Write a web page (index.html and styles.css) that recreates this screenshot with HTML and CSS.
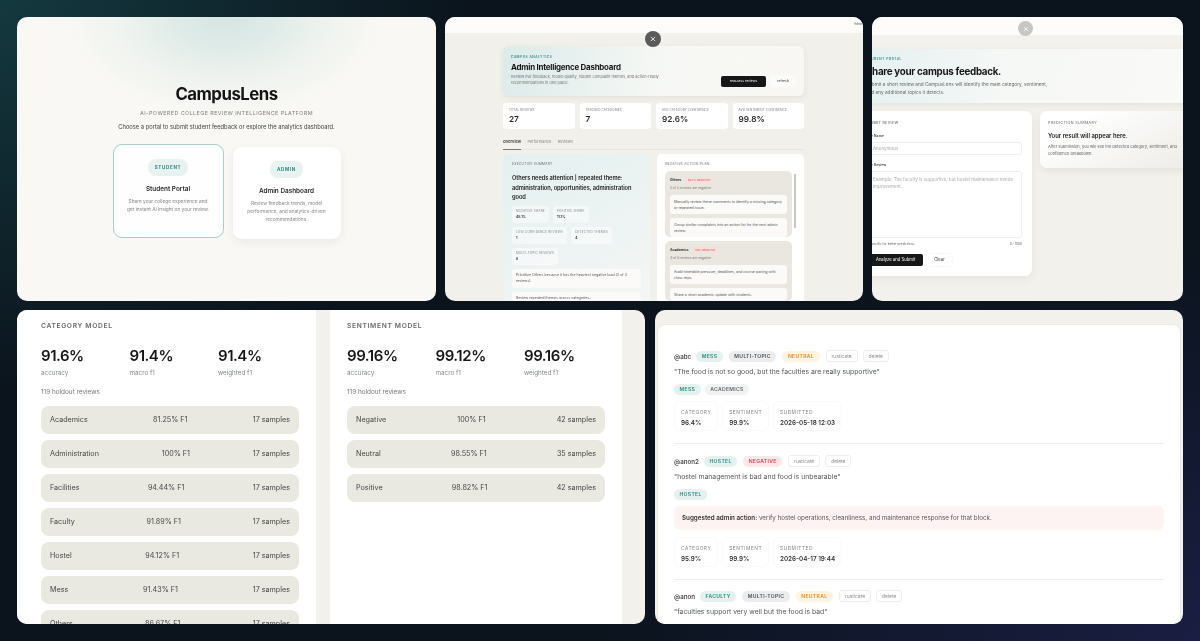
FILE: index.html
```html
<!DOCTYPE html>
<html lang="en">
<head>
  <meta charset="UTF-8">
  <title>CampusLens</title>
  <link rel="stylesheet" href="styles.css">
</head>
<body>
  <div class="collage">
    <div class="row-top">
      <section class="shot landing">
        <h1>CampusLens</h1>
        <p class="tagline">AI-POWERED COLLEGE REVIEW INTELLIGENCE PLATFORM</p>
        <p class="choose">Choose a portal to submit student feedback or explore the analytics dashboard.</p>
        <div class="portals">
          <div class="portal portal-active">
            <span class="portal-tag">STUDENT</span>
            <h3>Student Portal</h3>
            <p>Share your college experience and get instant AI insight on your review.</p>
          </div>
          <div class="portal portal-admin">
            <span class="portal-tag">ADMIN</span>
            <h3>Admin Dashboard</h3>
            <p>Review feedback trends, model performance, and analytics-driven recommendations.</p>
          </div>
        </div>
      </section>

      <section class="shot dash">
        <div class="topbar dash-topbar"><span class="top-pill">Admin</span></div>
        <button class="close close-dark">
          <svg viewBox="0 0 10 10" width="6" height="6"><path d="M1.5 1.5l7 7M8.5 1.5l-7 7" stroke="#fff" stroke-width="1.3" fill="none"/></svg>
        </button>
        <div class="dash-main">
          <div class="dash-hero">
            <div>
              <div class="eyebrow">CAMPUS ANALYTICS</div>
              <h2>Admin Intelligence Dashboard</h2>
              <p>Review live feedback, model quality, hidden complaint themes, and action-ready recommendations in one place.</p>
            </div>
            <div class="hero-btns">
              <span class="btn-dark">reassess reviews</span>
              <span class="btn-light">refresh</span>
            </div>
          </div>
          <div class="stats">
            <div class="stat"><small>TOTAL REVIEWS</small><b>27</b></div>
            <div class="stat"><small>TRACKED CATEGORIES</small><b>7</b></div>
            <div class="stat"><small>AVG CATEGORY CONFIDENCE</small><b>92.6%</b></div>
            <div class="stat"><small>AVG SENTIMENT CONFIDENCE</small><b>99.8%</b></div>
          </div>
          <div class="tabs">
            <span class="tab-on">Overview</span>
            <span>Performance</span>
            <span>Reviews</span>
          </div>
          <div class="dash-cols">
            <div class="summary">
              <div class="mini-title">EXECUTIVE SUMMARY</div>
              <h4>Others needs attention | repeated theme: administration, opportunities, administration good</h4>
              <div class="facts">
                <div class="fact"><small>NEGATIVE SHARE</small><b>48.1%</b></div>
                <div class="fact"><small>POSITIVE SHARE</small><b>11.1%</b></div>
                <div class="fact"><small>LOW-CONFIDENCE REVIEWS</small><b>1</b></div>
                <div class="fact"><small>DETECTED THEMES</small><b>4</b></div>
                <div class="fact"><small>MULTI-TOPIC REVIEWS</small><b>8</b></div>
              </div>
              <div class="note">Prioritize Others because it has the heaviest negative load (2 of 3 reviews).</div>
              <div class="note">Review repeated themes across categories.</div>
            </div>
            <div class="plan">
              <div class="plan-scroll"></div>
              <div class="mini-title">NEGATIVE ACTION PLAN</div>
              <div class="plan-group">
                <div class="plan-head"><b>Others</b><span class="plan-neg">66.7% NEGATIVE</span></div>
                <div class="plan-sub">2 of 3 reviews are negative</div>
                <div class="note">Manually review these comments to identify a missing category or repeated issue.</div>
                <div class="note">Group similar complaints into an action list for the next admin review.</div>
              </div>
              <div class="plan-group">
                <div class="plan-head"><b>Academics</b><span class="plan-neg">50% NEGATIVE</span></div>
                <div class="plan-sub">4 of 8 reviews are negative</div>
                <div class="note">Audit timetable pressure, deadlines, and course pacing with class reps.</div>
                <div class="note">Share a short academic update with students.</div>
              </div>
            </div>
          </div>
        </div>
      </section>

      <section class="shot student">
        <div class="topbar student-topbar"></div>
        <button class="close close-light">
          <svg viewBox="0 0 10 10" width="6" height="6"><path d="M1.5 1.5l7 7M8.5 1.5l-7 7" stroke="#fff" stroke-width="1.2" fill="none"/></svg>
        </button>
        <div class="student-main">
          <div class="student-hero">
            <div class="eyebrow">STUDENT PORTAL</div>
            <h2>Share your campus feedback.</h2>
            <p>Submit a short review and CampusLens will identify the main category, sentiment,<br>and any additional topics it detects.</p>
          </div>
          <div class="student-cols">
            <div class="submit">
              <div class="mini-title">SUBMIT REVIEW</div>
              <label>Your Name</label>
              <div class="field">Anonymous</div>
              <label>Your Review</label>
              <div class="field field-area">Example: The faculty is supportive, but hostel maintenance needs improvement.</div>
              <div class="hint"><span>Be specific for better predictions.</span><span>0 / 1000</span></div>
              <div class="submit-btns">
                <span class="btn-analyze">Analyze and Submit</span>
                <span class="btn-clear">Clear</span>
              </div>
            </div>
            <div class="predict">
              <div class="mini-title">PREDICTION SUMMARY</div>
              <h4>Your result will appear here.</h4>
              <p>After submission, you will see the detected category, sentiment, and confidence breakdown.</p>
            </div>
          </div>
        </div>
      </section>
    </div>

    <div class="row-bottom">
      <section class="shot models">
        <div class="model model-first">
          <div class="model-title">CATEGORY MODEL</div>
          <div class="scores">
            <div><b>91.6%</b><small>accuracy</small></div>
            <div><b>91.4%</b><small>macro f1</small></div>
            <div><b>91.4%</b><small>weighted f1</small></div>
          </div>
          <div class="holdout">119 holdout reviews</div>
          <div class="line"><span>Academics</span><span>81.25% F1</span><span>17 samples</span></div>
          <div class="line"><span>Administration</span><span>100% F1</span><span>17 samples</span></div>
          <div class="line"><span>Facilities</span><span>94.44% F1</span><span>17 samples</span></div>
          <div class="line"><span>Faculty</span><span>91.89% F1</span><span>17 samples</span></div>
          <div class="line"><span>Hostel</span><span>94.12% F1</span><span>17 samples</span></div>
          <div class="line"><span>Mess</span><span>91.43% F1</span><span>17 samples</span></div>
          <div class="line"><span>Others</span><span>86.67% F1</span><span>17 samples</span></div>
        </div>
        <div class="model model-second">
          <div class="model-title">SENTIMENT MODEL</div>
          <div class="scores">
            <div><b>99.16%</b><small>accuracy</small></div>
            <div><b>99.12%</b><small>macro f1</small></div>
            <div><b>99.16%</b><small>weighted f1</small></div>
          </div>
          <div class="holdout">119 holdout reviews</div>
          <div class="line"><span>Negative</span><span>100% F1</span><span>42 samples</span></div>
          <div class="line"><span>Neutral</span><span>98.55% F1</span><span>35 samples</span></div>
          <div class="line"><span>Positive</span><span>98.82% F1</span><span>42 samples</span></div>
        </div>
      </section>

      <section class="shot reviews">
        <div class="review-card">
          <article class="review">
            <div class="review-head">
              <b class="handle">@abc</b>
              <span class="chip chip-teal">MESS</span>
              <span class="chip chip-grey">MULTI-TOPIC</span>
              <span class="chip chip-amber">NEUTRAL</span>
              <span class="act">rusticate</span>
              <span class="act">delete</span>
            </div>
            <p class="quote">"The food is not so good, but the faculties are really supportive"</p>
            <div class="chips">
              <span class="chip chip-teal">MESS</span>
              <span class="chip chip-pale">ACADEMICS</span>
            </div>
            <div class="meta">
              <div><small>CATEGORY</small><b>96.4%</b></div>
              <div><small>SENTIMENT</small><b>99.9%</b></div>
              <div><small>SUBMITTED</small><b>2026-05-18 12:03</b></div>
            </div>
          </article>
          <article class="review review-flagged">
            <div class="review-head">
              <b class="handle">@anon2</b>
              <span class="chip chip-teal">HOSTEL</span>
              <span class="chip chip-red">NEGATIVE</span>
              <span class="act">rusticate</span>
              <span class="act">delete</span>
            </div>
            <p class="quote">"hostel management is bad and food is unbearable"</p>
            <div class="chips">
              <span class="chip chip-teal">HOSTEL</span>
            </div>
            <div class="alert"><b>Suggested admin action:</b> verify hostel operations, cleanliness, and maintenance response for that block.</div>
            <div class="meta">
              <div><small>CATEGORY</small><b>95.9%</b></div>
              <div><small>SENTIMENT</small><b>99.9%</b></div>
              <div><small>SUBMITTED</small><b>2026-04-17 19:44</b></div>
            </div>
          </article>
          <article class="review">
            <div class="review-head">
              <b class="handle">@anon</b>
              <span class="chip chip-teal">FACULTY</span>
              <span class="chip chip-grey">MULTI-TOPIC</span>
              <span class="chip chip-amber">NEUTRAL</span>
              <span class="act">rusticate</span>
              <span class="act">delete</span>
            </div>
            <p class="quote">"faculties support very well but the food is bad"</p>
          </article>
        </div>
      </section>
    </div>
  </div>
</body>
</html>
```

FILE: styles.css
```css
* {
  box-sizing: border-box;
}
html, body {
  margin: 0;
  height: 100%;
}
body {
  overflow: hidden;
  font-family: Inter, "Noto Sans", sans-serif;
  color: #1c1c1c;
  background:
    radial-gradient(ellipse 480px 400px at 0 0, #14393f 0%, rgba(20, 57, 63, 0) 100%),
    radial-gradient(ellipse 620px 420px at 100% 100%, #1a1e42 0%, rgba(26, 30, 66, 0) 100%),
    #0b131c;
}
h1, h2, h3, h4, p {
  margin: 0;
}
small, b {
  display: block;
}
.collage {
  display: flex;
  flex-direction: column;
  gap: 9px;
  padding: 17px;
}
.row-top {
  display: flex;
  gap: 9px;
  height: 284px;
}
.row-bottom {
  display: flex;
  gap: 10px;
  height: 314px;
}
.shot {
  position: relative;
  overflow: hidden;
  border-radius: 10px;
  background: #f3f1ec;
  filter: blur(0.3px);
}

/* landing */
.landing {
  width: 419px;
  display: flex;
  flex-direction: column;
  align-items: center;
  padding-top: 66px;
  background:
    radial-gradient(ellipse 160px 100px at 208px 0, #d6e6e3 0%, rgba(214, 230, 227, 0.75) 30%, rgba(214, 230, 227, 0.3) 62%, rgba(214, 230, 227, 0) 100%),
    #f9f8f4;
}
.landing h1 {
  font-size: 16.8px;
  line-height: 22px;
  font-weight: 700;
  letter-spacing: -0.03em;
  color: #141414;
}
.tagline {
  margin-top: 4px;
  font-size: 5.4px;
  line-height: 8px;
  letter-spacing: 0.08em;
  color: #7b7f80;
}
.choose {
  margin-top: 6px;
  font-size: 5.75px;
  line-height: 8px;
  color: #3e4142;
}
.portals {
  display: flex;
  gap: 9px;
  margin-top: 13px;
}
.portal {
  height: 92px;
  padding: 14px 10px 0;
  display: flex;
  flex-direction: column;
  align-items: center;
  text-align: center;
  background: #fff;
  border-radius: 9px;
}
.portal-active {
  width: 111px;
  height: 94px;
  padding: 14px 13px 0;
  border: 1px solid #a9cfca;
  background: #fdfefd;
}
.portal-admin {
  width: 108px;
  margin-top: 3px;
  box-shadow: 0 3px 10px rgba(60, 60, 50, 0.08);
}
.portal-tag {
  padding: 5.5px 7px;
  font-size: 4.6px;
  line-height: 6px;
  font-weight: 700;
  letter-spacing: 0.14em;
  color: #2b8a82;
  background: #e8f2f0;
  border-radius: 8px;
}
.portal h3 {
  margin-top: 9px;
  font-size: 6.4px;
  line-height: 9px;
  font-weight: 600;
  color: #2a2a2a;
}
.portal p {
  margin-top: 3px;
  font-size: 4.8px;
  line-height: 8px;
  color: #85878a;
}

/* topbars and close buttons */
.topbar {
  background: #fdfcfa;
}
.dash-topbar {
  height: 16px;
  display: flex;
  justify-content: flex-end;
}
.student-topbar {
  height: 18px;
}
.top-pill {
  width: 9px;
  margin: 3px 0 5px;
  overflow: hidden;
  font-size: 3px;
  line-height: 8px;
  color: #555;
  background: #fff;
  border-radius: 4px 0 0 4px;
}
.close {
  position: absolute;
  top: 14px;
  width: 16px;
  height: 16px;
  padding: 0;
  border: none;
  border-radius: 50%;
  display: flex;
  align-items: center;
  justify-content: center;
}
.close-dark {
  left: 200px;
  background: #5a5a5a;
}
.close-light {
  top: 4px;
  left: 146px;
  width: 15px;
  height: 15px;
  background: #c6c6c3;
}

/* admin dashboard */
.dash {
  width: 418px;
  background: #f2f0ea;
}
.dash-main {
  width: 301px;
  margin: 13px 0 0 58px;
}
.eyebrow {
  font-size: 3.2px;
  line-height: 5px;
  font-weight: 600;
  letter-spacing: 0.16em;
  color: #2b8a82;
}
.dash-hero {
  height: 50px;
  padding: 9px 8px 0;
  display: flex;
  justify-content: space-between;
  background: linear-gradient(100deg, #dcebea 0%, #f7f8f5 55%, #f8f7f3 100%);
  border-radius: 6px;
  box-shadow: 0 2px 6px rgba(60, 60, 50, 0.08);
}
.dash-hero > div:first-child {
  width: 156px;
}
.dash-hero h2 {
  margin-top: 1px;
  font-size: 7.95px;
  line-height: 12px;
  font-weight: 700;
  letter-spacing: -0.03em;
  color: #171717;
  white-space: nowrap;
}
.dash-hero p {
  margin-top: 1px;
  font-size: 3.9px;
  line-height: 6.4px;
  color: #777;
}
.hero-btns {
  display: flex;
  align-items: flex-start;
  gap: 4px;
  margin-top: 21px;
}
.btn-dark {
  width: 45px;
  height: 11px;
  font-size: 3.4px;
  line-height: 11px;
  text-align: center;
  color: #fff;
  background: #171717;
  border-radius: 2px;
}
.btn-light {
  width: 26px;
  height: 11px;
  font-size: 3.4px;
  line-height: 11px;
  text-align: center;
  color: #333;
  background: #fbfbf9;
  border-radius: 3px;
}
.stats {
  display: grid;
  grid-template-columns: repeat(4, 1fr);
  gap: 5px;
  margin-top: 7px;
}
.stat {
  height: 26px;
  padding: 5px 6px 0;
  background: #fff;
  border-radius: 4px;
}
.stat small {
  font-size: 3px;
  line-height: 4px;
  letter-spacing: 0.05em;
  color: #777;
  white-space: nowrap;
}
.stat b {
  margin-top: 2px;
  font-size: 8.2px;
  line-height: 11px;
  font-weight: 600;
  color: #2a2a2a;
}
.tabs {
  display: flex;
  gap: 6.5px;
  margin-top: 8px;
  height: 13px;
  font-size: 3.9px;
  line-height: 9px;
  color: #888;
  border-bottom: 1px solid #e8e6e0;
}
.tab-on {
  height: 13px;
  color: #333;
  font-weight: 600;
  border-bottom: 1px solid #777;
}
.dash-cols {
  display: grid;
  grid-template-columns: 147px 147px;
  gap: 7px;
  margin-top: 4px;
}
.summary {
  padding: 8px 9px 0;
  height: 170px;
  background: linear-gradient(150deg, #e4f0f0 0%, #f5f7f5 100%);
  border-radius: 5px;
}
.plan {
  position: relative;
  padding: 8px 12px 0 8px;
  height: 170px;
  background: #fff;
  border-radius: 5px;
}
.plan-scroll {
  position: absolute;
  top: 20px;
  right: 8px;
  width: 2px;
  height: 54px;
  background: #c9c7c1;
}
.mini-title {
  font-size: 3.2px;
  line-height: 5px;
  letter-spacing: 0.1em;
  color: #666;
}
.summary h4 {
  margin-top: 6px;
  font-size: 5.7px;
  line-height: 9.6px;
  font-weight: 600;
  letter-spacing: -0.01em;
  color: #222;
}
.facts {
  display: flex;
  flex-wrap: wrap;
  gap: 4px;
  margin-top: 4px;
  margin-bottom: 4px;
}
.fact {
  height: 17px;
  padding: 3px 4px 0;
  background: rgba(255, 255, 255, 0.45);
  border-radius: 3px;
}
.fact small {
  font-size: 3.1px;
  line-height: 5px;
  letter-spacing: 0.06em;
  color: #888;
  white-space: nowrap;
}
.fact b {
  font-size: 3.4px;
  line-height: 6px;
  font-weight: 600;
  color: #222;
}
.note {
  margin-bottom: 4px;
  padding: 3.5px 8px 3.5px 4px;
  font-size: 3.6px;
  line-height: 6px;
  color: #555;
  background: #fbfaf8;
  border-radius: 3px;
}
.plan-group {
  margin-bottom: 4px;
  padding: 5px 5px 0;
  background: #e9e7e0;
  border-radius: 5px;
}
.plan .note {
  padding-right: 4px;
}
.plan .mini-title {
  margin-bottom: 4px;
}
.plan-head {
  display: flex;
  align-items: center;
  gap: 4px;
  height: 7px;
  font-size: 3.4px;
}
.plan-head b {
  font-weight: 600;
}
.plan-neg {
  padding: 1px 3px;
  font-size: 2.7px;
  color: #d24a52;
  background: #f7dfdc;
  border-radius: 3px;
}
.plan-sub {
  margin: 3px 0 4px;
  font-size: 3.2px;
  line-height: 5px;
  color: #777;
}

/* student portal */
.student {
  width: 311px;
  background: #f3f1ec;
}
.student-main {
  width: 346px;
  margin: 14px 0 0 -16px;
}
.student-hero {
  height: 54px;
  padding: 8px 10px 0;
  background: linear-gradient(100deg, #e4f0f0 0%, #f6f8f6 45%, #fafaf8 100%);
  box-shadow: 0 2px 6px rgba(60, 60, 50, 0.08);
}
.student-hero h2 {
  margin-top: 2px;
  font-size: 9.8px;
  line-height: 15px;
  font-weight: 700;
  letter-spacing: -0.03em;
  color: #171717;
}
.student-hero p {
  margin-top: 2px;
  font-size: 4.7px;
  line-height: 7.6px;
  color: #666;
}
.student-cols {
  display: grid;
  grid-template-columns: 176px 156px;
  gap: 8px;
  margin-top: 8px;
  align-items: start;
}
.submit {
  height: 165px;
  padding: 9px 10px 0 9px;
  background: #fff;
  border-radius: 7px;
  box-shadow: 0 3px 8px rgba(60, 60, 50, 0.07);
}
.submit .mini-title {
  font-size: 3.6px;
  line-height: 6px;
  font-weight: 500;
}
.submit label {
  display: block;
  margin-top: 7px;
  font-size: 3.6px;
  line-height: 6px;
  font-weight: 500;
  color: #333;
}
.field {
  height: 13px;
  margin-top: 3px;
  padding: 0 7px;
  font-size: 4.5px;
  line-height: 11px;
  color: #aaa;
  border: 1px solid #efeeea;
  border-radius: 3px;
}
.field-area {
  height: 67px;
  padding: 4px 7px;
  line-height: 7.4px;
}
.hint {
  display: flex;
  justify-content: space-between;
  margin-top: 3px;
  font-size: 3.2px;
  line-height: 6px;
  color: #666;
}
.submit-btns {
  display: flex;
  gap: 4px;
  margin-top: 7px;
}
.btn-analyze {
  width: 58px;
  height: 12px;
  padding-left: 11px;
  font-size: 4.2px;
  line-height: 12px;
  color: #fff;
  background: #171717;
  border-radius: 2px;
}
.btn-clear {
  width: 25px;
  height: 12px;
  font-size: 4.2px;
  line-height: 12px;
  text-align: center;
  color: #333;
  background: #fff;
  border-radius: 2px;
  box-shadow: 0 0 2px rgba(60, 60, 50, 0.12);
}
.predict {
  height: 57px;
  padding: 9px 8px 0;
  background: linear-gradient(150deg, #ffffff 20%, #ecebe6 100%);
  border-radius: 7px;
  box-shadow: 0 3px 8px rgba(60, 60, 50, 0.07);
}
.predict .mini-title {
  font-size: 3.7px;
}
.predict h4 {
  margin-top: 6px;
  font-size: 5.9px;
  line-height: 9px;
  font-weight: 600;
  color: #222;
}
.predict p {
  margin-top: 3px;
  font-size: 4px;
  line-height: 7px;
  color: #666;
}

/* model cards */
.models {
  width: 628px;
  display: flex;
  gap: 14px;
}
.model {
  width: 299px;
  height: 100%;
  padding: 11px 17px 0 24px;
  background: #fff;
}
.model-second {
  width: 292px;
  padding: 11px 17px 0;
}
.model-title {
  font-size: 6.7px;
  line-height: 10px;
  font-weight: 600;
  letter-spacing: 0.1em;
  color: #66686a;
}
.scores {
  display: flex;
  margin-top: 15px;
}
.scores div {
  flex: none;
  width: 88.5px;
}
.scores b {
  font-size: 15px;
  line-height: 20px;
  font-weight: 600;
  letter-spacing: -0.03em;
  color: #171717;
}
.scores small {
  margin-top: 3px;
  font-size: 6.3px;
  line-height: 9px;
  color: #84888a;
}
.holdout {
  margin-top: 10px;
  font-size: 6.4px;
  line-height: 9px;
  color: #73777a;
}
.line {
  height: 28px;
  margin-top: 6px;
  padding: 0 9px 1px;
  display: flex;
  align-items: center;
  justify-content: space-between;
  font-size: 7.2px;
  color: #46484a;
  background: #e9e8e1;
  border-radius: 8px;
}
.holdout + .line {
  margin-top: 9px;
}

/* reviews */
.reviews {
  width: 528px;
  padding: 14px 2px 0;
  background: #f3f1ec;
}
.review-card {
  height: 320px;
  padding: 25px 16px 0;
  background: #fff;
  border: 1px solid #ebe9e4;
  border-radius: 8px;
}
.review {
  padding-bottom: 12px;
  margin-bottom: 11px;
  border-bottom: 1px solid #efeeeb;
}
.review-flagged {
  margin-bottom: 10px;
}
.review:last-child {
  border-bottom: none;
}
.review-head {
  display: flex;
  align-items: center;
  gap: 5px;
  height: 12px;
}
.handle {
  font-size: 6.2px;
  font-weight: 600;
  color: #4a4c4e;
}
.chip {
  height: 11px;
  padding: 0 5.5px;
  margin-right: 1px;
  font-size: 5.1px;
  line-height: 11px;
  font-weight: 600;
  letter-spacing: 0.06em;
  border-radius: 6px;
}
.chip-teal {
  color: #2b8a82;
  background: #e5f1ef;
}
.chip-grey {
  color: #4e5358;
  background: #ebecec;
}
.chip-pale {
  color: #5f6568;
  background: #f1f3f2;
}
.chip-amber {
  color: #e28c1e;
  background: #fff3e2;
}
.chip-red {
  color: #da3c4c;
  background: #fde7e9;
}
.act {
  height: 12px;
  padding: 0 5px;
  font-size: 4.9px;
  line-height: 10px;
  color: #8a8d90;
  border: 1px solid #eeeeed;
  border-radius: 3px;
}
.quote {
  margin-top: 4px;
  font-size: 6.8px;
  line-height: 12px;
  color: #55585a;
}
.chips {
  display: flex;
  gap: 3px;
  margin-top: 6px;
}
.alert {
  margin-top: 6px;
  padding: 0 8px;
  height: 24px;
  font-size: 6.27px;
  line-height: 24px;
  color: #55585a;
  background: #fdf3f2;
  border-radius: 6px;
}
.alert b {
  display: inline;
  font-weight: 600;
  color: #333;
}
.meta {
  display: flex;
  gap: 4px;
  margin-top: 6px;
}
.alert + .meta {
  margin-top: 7px;
}
.meta div {
  height: 30px;
  padding: 6px 6px 0;
  border: 1px solid #fafaf8;
  border-radius: 6px;
}
.meta small {
  font-size: 4.9px;
  line-height: 8px;
  letter-spacing: 0.1em;
  color: #85888a;
}
.meta b {
  margin-top: 3px;
  font-size: 6.3px;
  line-height: 9px;
  font-weight: 600;
  color: #333;
}
```
